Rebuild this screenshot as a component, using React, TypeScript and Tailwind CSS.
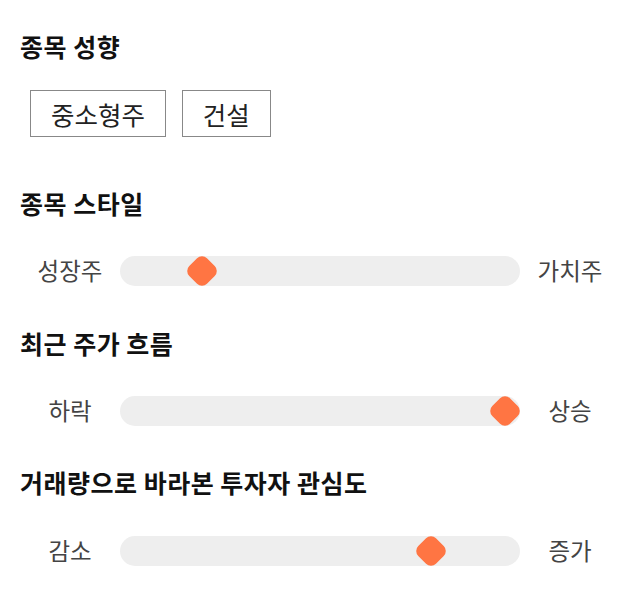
import React from 'react';

interface Scale {
    title: string;
    left: string;
    right: string;
    value: number; // 0 ~ 100
}

const FONT = { fontFamily: '"Noto Sans CJK KR", "Noto Sans", sans-serif' };

function Slider({ left, right, value }: Omit<Scale, 'title'>) {
    // thumb center moves between 15px and 385px inside the 400px track
    const x = 15 + value * 3.7;
    return (
        <div className="flex items-center h-[30px]">
            <div className="w-[100px] text-center text-[23.5px] leading-none text-[#444]">{left}</div>
            <div className="relative w-[400px] h-[30px] rounded-full bg-[#eeeeee]">
                <span
                    className="absolute top-1/2 w-[25px] h-[25px] -translate-x-1/2 -translate-y-1/2 rotate-45 rounded-[7px] bg-[#ff7543]"
                    style={{ left: x }}
                />
            </div>
            <div className="w-[100px] text-center text-[23.5px] leading-none text-[#444]">{right}</div>
        </div>
    );
}

function Heading({ children, className = '' }: { children: React.ReactNode; className?: string }) {
    return (
        <h2 className={`h-8 leading-8 text-[25px] tracking-[0.5px] font-bold text-[#111] ${className}`}>
            {children}
        </h2>
    );
}

export default function App() {
    const tags = ['중소형주', '건설'];

    return (
        <div className="w-[640px] bg-white px-5 pt-[30px] pb-8" style={FONT}>
            {/* 종목 성향 */}
            <Heading>종목 성향</Heading>
            <div className="flex gap-4 pl-[10px] mt-7">
                {tags.map((t) => (
                    <button
                        key={t}
                        className="h-[47px] px-[20px] border border-[#888] bg-white text-[25.5px] leading-none text-[#222]"
                    >
                        {t}
                    </button>
                ))}
            </div>

            <Heading className="mt-[50px]">종목 스타일</Heading>
            <div className="mt-[37px]">
                <Slider left="성장주" right="가치주" value={18} />
            </div>

            <Heading className="mt-[41px]">최근 주가 흐름</Heading>
            <div className="mt-[37px]">
                <Slider left="하락" right="상승" value={100} />
            </div>

            <Heading className="mt-10">거래량으로 바라본 투자자 관심도</Heading>
            <div className="mt-[38px]">
                <Slider left="감소" right="증가" value={80} />
            </div>
        </div>
    );
}
